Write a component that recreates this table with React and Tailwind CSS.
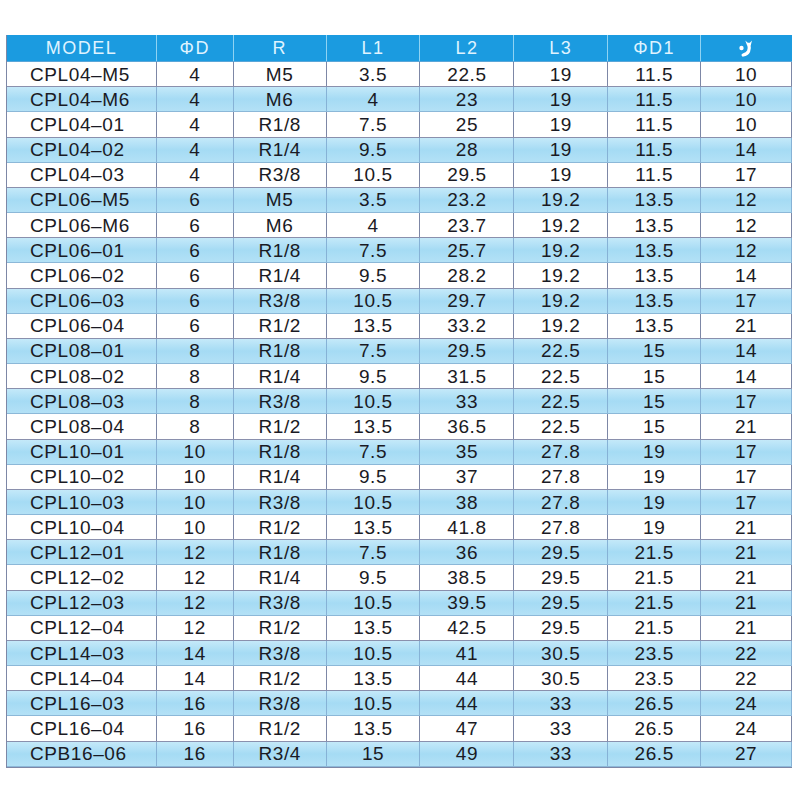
import React from "react";

const rows = [
  ["CPL04–M5", "4", "M5", "3.5", "22.5", "19", "11.5", "10"],
  ["CPL04–M6", "4", "M6", "4", "23", "19", "11.5", "10"],
  ["CPL04–01", "4", "R1/8", "7.5", "25", "19", "11.5", "10"],
  ["CPL04–02", "4", "R1/4", "9.5", "28", "19", "11.5", "14"],
  ["CPL04–03", "4", "R3/8", "10.5", "29.5", "19", "11.5", "17"],
  ["CPL06–M5", "6", "M5", "3.5", "23.2", "19.2", "13.5", "12"],
  ["CPL06–M6", "6", "M6", "4", "23.7", "19.2", "13.5", "12"],
  ["CPL06–01", "6", "R1/8", "7.5", "25.7", "19.2", "13.5", "12"],
  ["CPL06–02", "6", "R1/4", "9.5", "28.2", "19.2", "13.5", "14"],
  ["CPL06–03", "6", "R3/8", "10.5", "29.7", "19.2", "13.5", "17"],
  ["CPL06–04", "6", "R1/2", "13.5", "33.2", "19.2", "13.5", "21"],
  ["CPL08–01", "8", "R1/8", "7.5", "29.5", "22.5", "15", "14"],
  ["CPL08–02", "8", "R1/4", "9.5", "31.5", "22.5", "15", "14"],
  ["CPL08–03", "8", "R3/8", "10.5", "33", "22.5", "15", "17"],
  ["CPL08–04", "8", "R1/2", "13.5", "36.5", "22.5", "15", "21"],
  ["CPL10–01", "10", "R1/8", "7.5", "35", "27.8", "19", "17"],
  ["CPL10–02", "10", "R1/4", "9.5", "37", "27.8", "19", "17"],
  ["CPL10–03", "10", "R3/8", "10.5", "38", "27.8", "19", "17"],
  ["CPL10–04", "10", "R1/2", "13.5", "41.8", "27.8", "19", "21"],
  ["CPL12–01", "12", "R1/8", "7.5", "36", "29.5", "21.5", "21"],
  ["CPL12–02", "12", "R1/4", "9.5", "38.5", "29.5", "21.5", "21"],
  ["CPL12–03", "12", "R3/8", "10.5", "39.5", "29.5", "21.5", "21"],
  ["CPL12–04", "12", "R1/2", "13.5", "42.5", "29.5", "21.5", "21"],
  ["CPL14–03", "14", "R3/8", "10.5", "41", "30.5", "23.5", "22"],
  ["CPL14–04", "14", "R1/2", "13.5", "44", "30.5", "23.5", "22"],
  ["CPL16–03", "16", "R3/8", "10.5", "44", "33", "26.5", "24"],
  ["CPL16–04", "16", "R1/2", "13.5", "47", "33", "26.5", "24"],
  ["CPB16–06", "16", "R3/4", "15", "49", "33", "26.5", "27"],
];

const widths = [
  "w-[150px]",
  "w-[77px]",
  "w-[93px]",
  "w-[94px]",
  "w-[94px]",
  "w-[94px]",
  "w-[93px]",
  "w-[91px]",
];

function WrenchIcon() {
  return (
    <svg width="13" height="17" viewBox="0 0 12 15" fill="none">
      <path d="M5.8 0.2 L7.5 4.8 L10.8 4.8 L12 0.2 L10 2.1 L8.1 2.1 Z" fill="white" />
      <path d="M9.1 4 C10.3 8.6 9 12.5 3.8 13.5" stroke="white" strokeWidth="3" strokeLinecap="round" />
      <circle cx="2.3" cy="7" r="2" fill="white" />
    </svg>
  );
}

const headers = ["MODEL", "ΦD", "R", "L1", "L2", "L3", "ΦD1"];

export default function App() {
  return (
    <div
      className="w-[800px] h-[800px] bg-white pl-[6px] pt-[35px]"
      style={{ fontFamily: '"Liberation Sans", Arial, sans-serif' }}
    >
      <div className="w-[786px] flex flex-col border-l border-b border-[#7d87a6]">
        <div className="flex h-[27px] bg-[#1b9be0] border-b border-[#5aa6d8]">
          {headers.map((h, i) => (
            <div
              key={i}
              className={`${widths[i]} flex items-center justify-center border-r border-[#8fd3f3] text-[18px] tracking-[1.5px] text-[#dff3ff] leading-none`}
            >
              {h}
            </div>
          ))}
          <div className={`${widths[7]} flex items-center justify-center pr-[2px]`}>
            <WrenchIcon />
          </div>
        </div>
        {rows.map((r, ri) => {
          const blue = ri % 2 === 1;
          return (
            <div
              key={ri}
              className={`flex h-[25.18px] border-b ${
                blue
                  ? "bg-gradient-to-b from-[#c4e9f9] via-[#a5dbf4] to-[#b3e1f6] border-[#8cb8d8]"
                  : "bg-white border-[#8a90ad]"
              }`}
            >
              {r.map((c, ci) => (
                <div
                  key={ci}
                  className={`${widths[ci]} flex items-center justify-center border-r ${
                    blue ? "border-[#86b2d6]" : "border-[#7d87a6]"
                  } text-[19px] tracking-[0.6px] text-[#1a1a24] leading-none ${
                    ci === 0 ? "justify-start pl-[23px]" : ""
                  }`}
                >
                  {c}
                </div>
              ))}
            </div>
          );
        })}
      </div>
    </div>
  );
}
